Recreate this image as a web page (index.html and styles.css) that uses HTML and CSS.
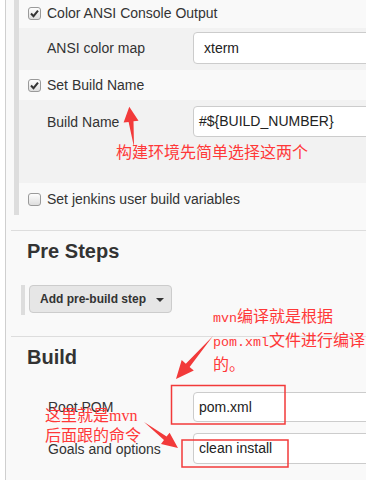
FILE: index.html
```html
<!DOCTYPE html>
<html>
<head>
<meta charset="utf-8">
<link rel="stylesheet" href="styles.css">
</head>
<body>
<div class="page">
  <div class="env">
    <div class="group">
      <div class="check-row row-first">
        <span class="cb"><svg viewBox="0 0 13 13" class="tick"><path d="M3 6.5 L5.5 9.2 L10 3.6" /></svg></span>
        <span>Color ANSI Console Output</span>
      </div>
      <div class="nested nested-ansi">
        <span class="lbl">ANSI color map</span>
        <div class="select">xterm</div>
      </div>
      <div class="check-row row-second">
        <span class="cb"><svg viewBox="0 0 13 13" class="tick"><path d="M3 6.5 L5.5 9.2 L10 3.6" /></svg></span>
        <span>Set Build Name</span>
      </div>
      <div class="nested nested-name">
        <div class="nrow">
          <span class="lbl">Build Name</span>
          <div class="input">#${BUILD_NUMBER}</div>
        </div>
      </div>
      <div class="check-row row-third">
        <span class="cb"></span>
        <span>Set jenkins user build variables</span>
      </div>
    </div>
  </div>
  <div class="sep"></div>
  <h2 class="heading">Pre Steps</h2>
  <div class="step-bar">
    <div class="btn">Add pre-build step <span class="caret"></span></div>
  </div>
  <div class="sep sep-build"></div>
  <h2 class="heading">Build</h2>
  <div class="field field-pom">
    <span class="flbl">Root POM</span>
    <div class="input">pom.xml</div>
  </div>
  <div class="field field-goals">
    <span class="flbl">Goals and options</span>
    <div class="input">clean install</div>
  </div>
</div>

<svg class="marks" viewBox="0 0 366 480" width="366" height="480">
  <polygon points="129.3,106.7 138.5,120.7 133.5,121.3 134,147 128.6,121.9 123.6,122.5" />
  <polygon points="176,379 193.8,370.6 189.6,367 213,336 185.8,363.7 181.7,360.1" />
  <polygon points="178,448 169.6,432.7 166.6,436.6 144,422 164,440 161,443.9" />
  <rect x="171.5" y="385.5" width="113.5" height="38.5" class="box" />
  <rect x="182" y="440" width="106" height="27" class="box" />
</svg>

<div class="note note-env">构建环境先简单选择这两个</div>
<div class="note note-mvn"><span class="mono">mvn</span>编译就是根据<br><span class="mono">pom.xml</span>文件进行编译<br>的。</div>
<div class="note note-cmd">这里就是<span class="serif">mvn</span><br>后面跟的命令</div>
</body>
</html>
```

FILE: styles.css
```css
html, body {
  margin: 0;
  padding: 0;
}
body {
  position: relative;
  width: 366px;
  height: 480px;
  overflow: hidden;
  background: #ffffff;
  font-family: "Liberation Sans", Arial, sans-serif;
  font-size: 14px;
  color: #333333;
}
.page {
  margin-left: 5px;
  width: 360px;
  height: 480px;
  overflow: hidden;
  border-left: 1px solid #cfcfcf;
  background: #f9f9f9;
}
.env {
  padding-left: 8px;
}
.group {
  border-left: 5px solid #dddddd;
}
.check-row {
  display: flex;
  align-items: center;
  gap: 6px;
  padding-left: 9px;
  box-sizing: border-box;
}
.row-first {
  height: 28px;
  padding-bottom: 2px;
}
.row-second {
  height: 30px;
}
.row-third {
  height: 32px;
}
.cb {
  position: relative;
  width: 11px;
  height: 11px;
  border: 1px solid #9a9a9a;
  border-radius: 3px;
  background: linear-gradient(#fdfdfd, #dedede);
  flex: none;
}
.tick {
  position: absolute;
  left: -1px;
  top: -1px;
  width: 13px;
  height: 13px;
  fill: none;
  stroke: #333333;
  stroke-width: 2;
}
.nested {
  background: #f2f2f2;
}
.nested-ansi {
  display: grid;
  grid-template-columns: 174px 1fr;
  align-items: center;
  height: 42px;
  padding: 4px 0 6px;
  box-sizing: border-box;
}
.lbl {
  padding-left: 28px;
}
.select {
  height: 32px;
  box-sizing: border-box;
  border: 1px solid #cccccc;
  border-radius: 4px;
  background: #ffffff;
  padding-left: 10px;
  line-height: 30px;
  color: #222222;
  margin-right: -10px;
}
.nested-name {
  height: 83px;
  padding-top: 6px;
  box-sizing: border-box;
}
.nrow {
  display: grid;
  grid-template-columns: 174px 1fr;
  align-items: center;
}
.input {
  height: 31px;
  box-sizing: border-box;
  border: 1px solid #cccccc;
  border-radius: 4px;
  background: #ffffff;
  padding-left: 5px;
  line-height: 29px;
  color: #222222;
  margin-right: -10px;
}
.sep {
  margin: 15px 0 0 5px;
  border-top: 1px solid #dddddd;
}
.sep-build {
  margin-top: 21px;
}
.heading {
  margin: 8px 0 0 21px;
  font-size: 20px;
  line-height: 24px;
  font-weight: bold;
  color: #333333;
}
.step-bar {
  margin: 22px 0 0 15px;
  height: 30px;
  border-left: 4px solid #dddddd;
  padding-left: 4px;
}
.btn {
  display: flex;
  align-items: center;
  gap: 10px;
  width: 143px;
  height: 28px;
  box-sizing: border-box;
  border: 1px solid #cccccc;
  border-radius: 4px;
  background: #e6e6e6;
  padding-left: 10px;
  font-size: 12px;
  font-weight: bold;
  color: #333333;
}
.caret {
  width: 0;
  height: 0;
  border-left: 4px solid transparent;
  border-right: 4px solid transparent;
  border-top: 4px solid #333333;
  margin-top: 1px;
}
.field {
  display: grid;
  grid-template-columns: 187px 1fr;
  align-items: center;
}
.flbl {
  padding-left: 42px;
}
.field-pom {
  margin-top: 23px;
}
.field-pom .input {
  height: 30px;
  line-height: 28px;
}
.field-goals {
  margin-top: 11px;
}
.marks {
  position: absolute;
  left: 0;
  top: 0;
  fill: #f23a3a;
}
.marks .box {
  fill: none;
  stroke: #f23a3a;
  stroke-width: 1.5;
}
.note {
  position: absolute;
  font-family: "Noto Sans CJK SC", sans-serif;
  font-size: 16px;
  color: #ff3838;
  white-space: nowrap;
}
.note-env {
  left: 116px;
  top: 141px;
  line-height: 20px;
}
.note-mvn {
  left: 213px;
  top: 305px;
  line-height: 20px;
}
.note-cmd {
  left: 45px;
  top: 405px;
  line-height: 19px;
}
.mono {
  font-family: "Liberation Mono", monospace;
  font-size: 13.33px;
}
.serif {
  font-family: "Liberation Serif", serif;
  font-size: 16px;
}
```
